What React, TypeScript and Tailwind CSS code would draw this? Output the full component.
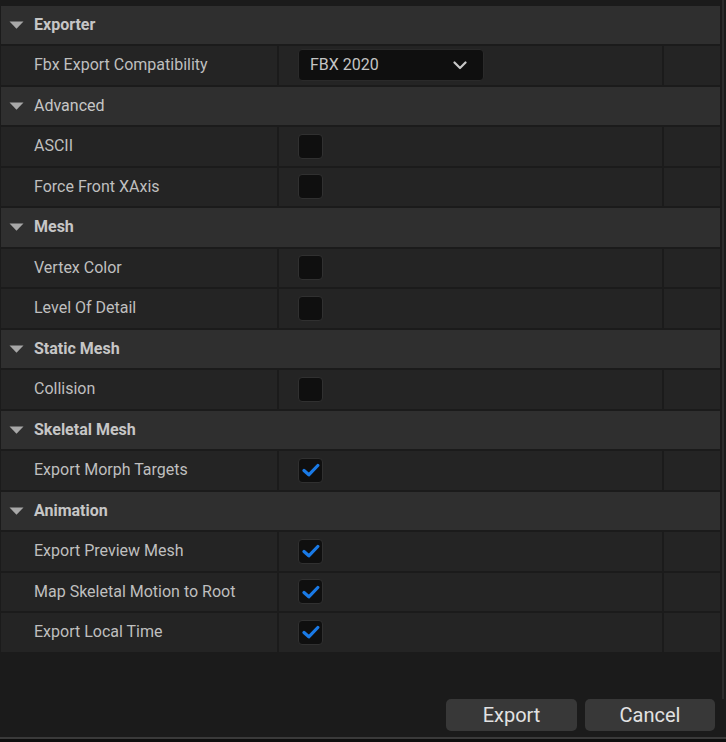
import React from "react";

type Item =
  | { kind: "header"; label: string }
  | { kind: "combo"; label: string; value: string }
  | { kind: "check"; label: string; checked: boolean };

const items: Item[] = [
  { kind: "header", label: "Exporter" },
  { kind: "combo", label: "Fbx Export Compatibility", value: "FBX 2020" },
  { kind: "header", label: "Advanced" },
  { kind: "check", label: "ASCII", checked: false },
  { kind: "check", label: "Force Front XAxis", checked: false },
  { kind: "header", label: "Mesh" },
  { kind: "check", label: "Vertex Color", checked: false },
  { kind: "check", label: "Level Of Detail", checked: false },
  { kind: "header", label: "Static Mesh" },
  { kind: "check", label: "Collision", checked: false },
  { kind: "header", label: "Skeletal Mesh" },
  { kind: "check", label: "Export Morph Targets", checked: true },
  { kind: "header", label: "Animation" },
  { kind: "check", label: "Export Preview Mesh", checked: true },
  { kind: "check", label: "Map Skeletal Motion to Root", checked: true },
  { kind: "check", label: "Export Local Time", checked: true },
];

const boldHeaders = new Set(["Exporter", "Mesh", "Static Mesh", "Skeletal Mesh", "Animation"]);

function Triangle() {
  return (
    <svg width="15" height="8" viewBox="0 0 15 8" className="shrink-0">
      <path d="M0.5 0.5 L14.5 0.5 L7.5 7.8 Z" fill="#a8a8a8" />
    </svg>
  );
}

function Checkbox({ checked }: { checked: boolean }) {
  return (
    <div className="w-[25px] h-[25px] rounded-[4px] bg-[#0f0f0f] border border-[#303030] flex items-center justify-center">
      {checked && (
        <svg width="18" height="14" viewBox="0 0 18 14">
          <path d="M2 7.5 L6.8 11.8 L15.8 2.5" fill="none" stroke="#1a7ae6" strokeWidth="3.2" strokeLinecap="round" strokeLinejoin="round" />
        </svg>
      )}
    </div>
  );
}

function Combo({ value }: { value: string }) {
  return (
    <div className="w-[186px] h-[32px] rounded-[4px] bg-[#0f0f0f] border border-[#2a2a2a] flex items-center justify-between pl-[11px] pr-[16px] text-[16px] text-[#c4c4c4]">
      <span>{value}</span>
      <svg width="14" height="9" viewBox="0 0 14 9">
        <path d="M1.5 1.5 L7 7 L12.5 1.5" fill="none" stroke="#c8c8c8" strokeWidth="2.2" strokeLinecap="round" strokeLinejoin="round" />
      </svg>
    </div>
  );
}

export default function App() {
  return (
    <div
      className="w-[726px] h-[742px] bg-[#1b1b1b] flex flex-col overflow-hidden"
      style={{ fontFamily: "Roboto, 'Noto Sans', sans-serif" }}
    >
      <div className="flex flex-1 min-h-0">
        <div className="w-[720px] pl-[1px] pt-[5.5px] flex flex-col gap-[2px]">
          {items.map((it, i) =>
            it.kind === "header" ? (
              <div
                key={i}
                className="h-[38.5px] bg-[#2f2f2f] flex items-center gap-[10px] pl-[8px]"
              >
                <Triangle />
                <span
                  className={`text-[16px] text-[#c6c6c6] ${boldHeaders.has(it.label) ? "font-bold" : "font-normal"}`}
                >
                  {it.label}
                </span>
              </div>
            ) : (
              <div key={i} className="h-[38.5px] flex gap-[2px]">
                <div className="w-[276px] bg-[#242424] flex items-center pl-[33px] text-[16px] text-[#bfbfbf]">
                  {it.label}
                </div>
                <div className="w-[383px] bg-[#242424] flex items-center pl-[19px]">
                  {it.kind === "combo" ? <Combo value={it.value} /> : <Checkbox checked={it.checked} />}
                </div>
                <div className="flex-1 bg-[#242424]" />
              </div>
            )
          )}
        </div>
        <div className="w-[2px] ml-[2px] bg-[#2c2c2c]" />
      </div>
      <div className="h-[38px] flex justify-end gap-[8px] pr-[11px] shrink-0">
        <button className="w-[131px] h-[32px] rounded-[5px] bg-[#383838] text-[20px] text-[#e2e2e2] flex items-center justify-center">
          Export
        </button>
        <button className="w-[130px] h-[32px] rounded-[5px] bg-[#383838] text-[20px] text-[#e2e2e2] flex items-center justify-center">
          Cancel
        </button>
      </div>
      <div className="h-[2px] bg-[#3a3a3a] shrink-0" />
      <div className="h-[3px] bg-[#0e0e0e] shrink-0" />
    </div>
  );
}
